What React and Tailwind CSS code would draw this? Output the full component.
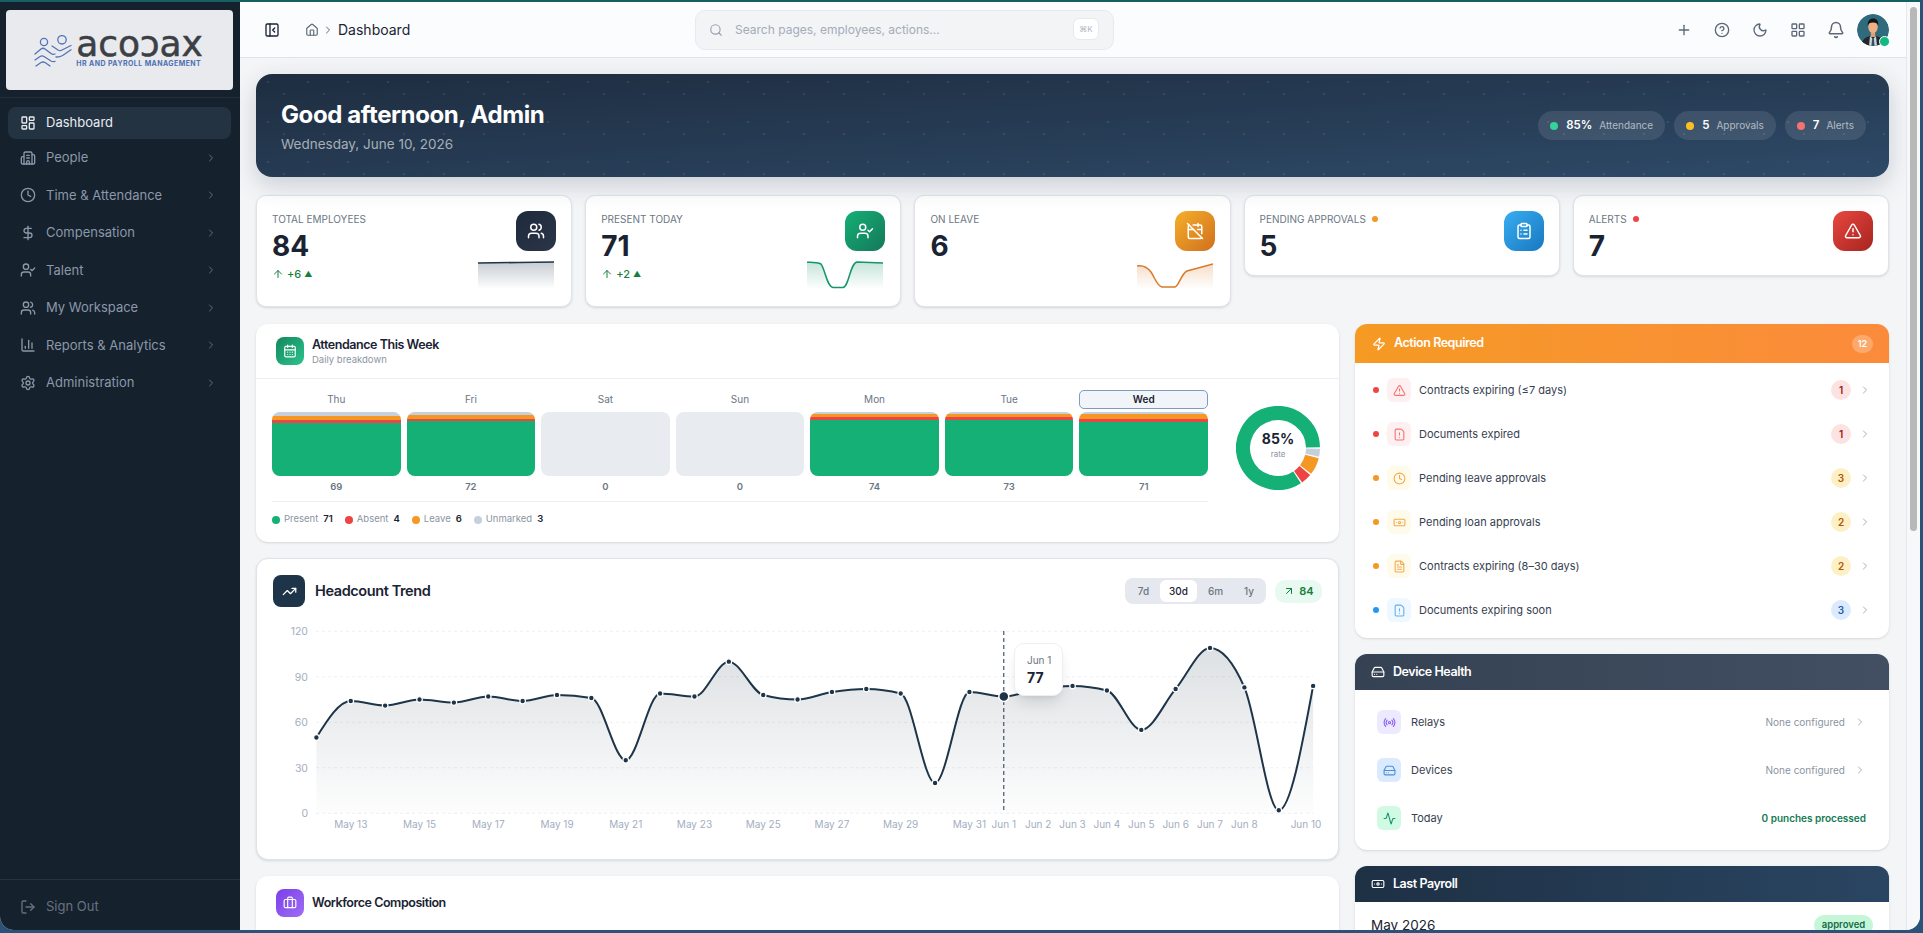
import React from "react";
import {
  Activity, ArrowUp, ArrowUpRight, Banknote, Bell, Briefcase, Building2, CalendarDays, CalendarOff,
  ChartColumn, ChevronRight, CircleHelp, ClipboardList, Clock, DollarSign, FileText, FileWarning,
  HardDrive, Home, LayoutDashboard, LayoutGrid, LogOut, Moon, PanelLeftClose, Plus, Radio, Search,
  Settings, TrendingUp, TriangleAlert, UserCheck, Users, Zap,
} from "lucide-react";

const navItems = [
  { label: "People", icon: Building2 },
  { label: "Time & Attendance", icon: Clock },
  { label: "Compensation", icon: DollarSign },
  { label: "Talent", icon: UserCheck },
  { label: "My Workspace", icon: Users },
  { label: "Reports & Analytics", icon: ChartColumn },
  { label: "Administration", icon: Settings },
];

const days = [
  { day: "Thu", total: 69, parts: [4, 4, 3] },
  { day: "Fri", total: 72, parts: [3, 4, 2] },
  { day: "Sat", total: 0 },
  { day: "Sun", total: 0 },
  { day: "Mon", total: 74, parts: [2, 3, 3] },
  { day: "Tue", total: 73, parts: [2, 3, 3] },
  { day: "Wed", total: 71, parts: [2, 5, 3], today: true },
];

const trend = [50, 74, 71, 75, 73, 77, 74, 78, 76, 35, 79, 77, 100, 78, 75, 80, 82, 79, 20, 80, 77, 82, 84, 81, 55, 82, 109, 83, 2, 84];
const xLabels = {
  1: "May 13", 3: "May 15", 5: "May 17", 7: "May 19", 9: "May 21", 11: "May 23", 13: "May 25", 15: "May 27",
  17: "May 29", 19: "May 31", 20: "Jun 1", 21: "Jun 2", 22: "Jun 3", 23: "Jun 4", 24: "Jun 5", 25: "Jun 6", 26: "Jun 7", 27: "Jun 8",
};

const actions = [
  { label: "Contracts expiring (≤7 days)", count: 1, icon: TriangleAlert, tone: "red" },
  { label: "Documents expired", count: 1, icon: FileWarning, tone: "red" },
  { label: "Pending leave approvals", count: 3, icon: Clock, tone: "amber" },
  { label: "Pending loan approvals", count: 2, icon: Banknote, tone: "amber" },
  { label: "Contracts expiring (8–30 days)", count: 2, icon: FileText, tone: "amber" },
  { label: "Documents expiring soon", count: 3, icon: FileWarning, tone: "blue" },
];

const tones = {
  red: { dot: "bg-[#ef4444]", box: "bg-[#fef0f0] text-[#f87171]", badge: "bg-[#fde2e2] text-[#991b1b]" },
  amber: { dot: "bg-[#f59723]", box: "bg-[#fffbeb] text-[#f5a94a]", badge: "bg-[#fdf0c4] text-[#b45309]" },
  blue: { dot: "bg-[#2196f3]", box: "bg-[#eff8ff] text-[#60aef0]", badge: "bg-[#dbeafe] text-[#1e5ea8]" },
};

// same curve as d3 curveMonotoneX
const monotonePath = (pts) => {
  const n = pts.length;
  const h = [], s = [], t = [];
  for (let i = 0; i < n - 1; i++) {
    h[i] = pts[i + 1][0] - pts[i][0];
    s[i] = (pts[i + 1][1] - pts[i][1]) / h[i];
  }
  for (let i = 1; i < n - 1; i++) {
    const p = (s[i - 1] * h[i] + s[i] * h[i - 1]) / (h[i - 1] + h[i]);
    t[i] = (Math.sign(s[i - 1]) + Math.sign(s[i])) * Math.min(Math.abs(s[i - 1]), Math.abs(s[i]), 0.5 * Math.abs(p));
  }
  t[0] = (3 * s[0] - t[1]) / 2;
  t[n - 1] = (3 * s[n - 2] - t[n - 2]) / 2;
  let d = `M${pts[0][0]},${pts[0][1]}`;
  for (let i = 0; i < n - 1; i++) {
    const k = h[i] / 3;
    d += `C${pts[i][0] + k},${pts[i][1] + k * t[i]} ${pts[i + 1][0] - k},${pts[i + 1][1] - k * t[i + 1]} ${pts[i + 1][0]},${pts[i + 1][1]}`;
  }
  return d;
};

const donutArc = (from, to, r = 35, c = 42) => {
  const rad = (a) => (a * Math.PI) / 180;
  const x = (a) => c + r * Math.cos(rad(a));
  const y = (a) => c - r * Math.sin(rad(a));
  return `M${x(from)} ${y(from)}A${r} ${r} 0 ${to - from > 180 ? 1 : 0} 0 ${x(to)} ${y(to)}`;
};

const Logo = () => (
  <div className="flex items-center justify-center gap-[4px] h-20 pr-[2px] rounded-[4px] bg-[#e8eaed]">
    <svg width="38" height="32" viewBox="0 0 38 32" fill="none" stroke="#5374b8" strokeWidth="1.3" strokeLinecap="round" strokeLinejoin="round" className="mt-[2px]">
      <circle cx="10" cy="7" r="3.6" />
      <circle cx="28" cy="4.8" r="4.2" />
      <path d="M1 19l6-5q2-1.5 4 0l6 4.5q2 1.5 4 .5" />
      <path d="M18 11l6 4q2 1.2 4 0l9-4.5" />
      <path d="M22 22l3-.2q2-.3 4-1.5l8-5.5" />
      <path d="M1 25l5-3.5q2-1.2 4 0l7 4.5q2 1 4 .3" />
      <path d="M2 31l5-3.5q2-1 4 0l5 3.5" />
    </svg>
    <div className="flex flex-col">
      <span className="h-[25px] text-[36px] leading-[24px] tracking-[-0.1px] text-[#3c3f45] [-webkit-text-stroke:0.5px_#3c3f45] [font-family:'DejaVu_Sans',sans-serif] whitespace-nowrap">acoɔax</span>
      <span className="mt-[2px] text-[7px] leading-[10px] font-bold tracking-[0.42px] text-[#4f70b4] whitespace-nowrap">HR AND PAYROLL MANAGEMENT</span>
    </div>
  </div>
);

const Sidebar = () => (
  <aside className="w-[240px] shrink-0 flex flex-col bg-[#16212e]">
    <div className="pt-2 pb-[7px] pl-[6px] pr-[7px] border-b border-[#232f3c]">
      <Logo />
    </div>
    <nav className="flex-1 pt-[9px] pl-2 pr-[9px]">
      <div className="flex items-center gap-[10px] h-8 pl-3 rounded-lg bg-[#243342] text-[13px] text-[#e8edf2]">
        <LayoutDashboard size={16} />
        Dashboard
      </div>
      {navItems.map((item) => (
        <div key={item.label} className="flex items-center gap-[10px] h-[37.5px] pl-3 pr-[14px] text-[13px] text-[#8a98a8]">
          <item.icon size={16} />
          <span className="flex-1">{item.label}</span>
          <ChevronRight size={12} className="text-[#5f6e7e]" />
        </div>
      ))}
    </nav>
    <div className="flex items-center gap-[10px] h-[51px] pl-5 pt-[3px] border-t border-[#27333f] text-[13px] text-[#66727f]">
      <LogOut size={16} />
      Sign Out
    </div>
  </aside>
);

const Avatar = () => (
  <div className="relative w-8 h-8 ml-[2px]">
    <svg width="32" height="32" viewBox="0 0 32 32" className="rounded-full">
      <circle cx="16" cy="16" r="16" fill="#2f6a7d" />
      <path d="M4 32c1-7 5-9 9-10h6c4 1 8 3 9 10z" fill="#23262b" />
      <path d="M13 22l3 3 3-3 1 10h-8z" fill="#c9d6df" />
      <path d="M15.2 24h1.6l.8 8h-3.2z" fill="#37506a" />
      <rect x="13.8" y="17" width="4.4" height="6" fill="#e0a070" />
      <ellipse cx="16" cy="13" rx="4.8" ry="6" fill="#eeb084" />
      <path d="M10.8 12c-.6-5 2-7.5 5.4-7.5S21.8 7 21.2 12c-.6-2.5-2-3.5-5.2-3.5S11.4 9.5 10.8 12z" fill="#15161a" />
    </svg>
    <span className="absolute -right-[1px] -bottom-[1px] w-[11px] h-[11px] rounded-full bg-[#10b981] border border-white" />
  </div>
);

const TopBar = () => (
  <header className="flex items-center h-14 shrink-0 border-b border-[#dfe3ea] bg-[#fbfcfd] pr-[17px]">
    <div className="flex items-center w-[455px] pl-6 text-[#5b6878]">
      <PanelLeftClose size={16} className="text-[#1a2332]" />
      <Home size={14} className="ml-[25px]" />
      <ChevronRight size={12} className="ml-[3px]" />
      <span className="ml-[4px] text-[14px] text-[#1a2332]">Dashboard</span>
    </div>
    <div className="flex items-center w-[419px] h-10 pl-[13px] pr-[14px] rounded-[10px] border border-[#e7e9ee] bg-[#f3f4f6]">
      <Search size={14} className="text-[#98a2b0]" />
      <span className="ml-3 flex-1 text-[12px] text-[#a3acb8]">Search pages, employees, actions...</span>
      <span className="flex items-center justify-center w-[26px] h-[22px] rounded-md border border-[#e7e9ee] bg-white text-[8px] text-[#b0b7c2] -mt-[2px]">⌘K</span>
    </div>
    <div className="ml-auto flex items-center text-[#5b6878]">
      {[Plus, CircleHelp, Moon, LayoutGrid, Bell].map((Icon, i) => (
        <span key={i} className="flex items-center justify-center w-[38px]">
          <Icon size={i === 4 ? 18 : 16} />
        </span>
      ))}
      <Avatar />
    </div>
  </header>
);

const Pill = ({ dot, value, label }) => (
  <div className="flex items-center h-[29px] px-3 rounded-full bg-white/10">
    <span className={`w-2 h-2 rounded-full ${dot}`} />
    <span className="ml-2 text-[11.5px] font-semibold text-white">{value}</span>
    <span className="ml-[7px] text-[10px] text-white/60">{label}</span>
  </div>
);

const Hero = () => (
  <section className="relative flex items-center justify-between h-[103px] pl-[25px] pr-[23px] rounded-2xl bg-gradient-to-br from-[#1e2d40] to-[#2e4a68] shadow-[0_8px_24px_rgba(30,50,75,0.2)] overflow-hidden">
    <div className="absolute inset-0 bg-[radial-gradient(circle,rgba(255,255,255,0.09)_1px,transparent_1.2px)] bg-[length:40px_40px] bg-[position:-8px_-12px]" />
    <div className="absolute inset-0 bg-[radial-gradient(circle,rgba(255,255,255,0.09)_1px,transparent_1.2px)] bg-[length:40px_40px] bg-[position:-32px_0px]" />
    <div className="relative pt-[2px]">
      <h1 className="text-[24px] leading-8 font-bold tracking-[-0.4px] text-white">Good afternoon, Admin</h1>
      <p className="mt-[3px] text-[13.5px] leading-5 text-white/60">Wednesday, June 10, 2026</p>
    </div>
    <div className="relative flex gap-[9px]">
      <Pill dot="bg-[#34d399]" value="85%" label="Attendance" />
      <Pill dot="bg-[#fbbf24]" value="5" label="Approvals" />
      <Pill dot="bg-[#f87171]" value="7" label="Alerts" />
    </div>
  </section>
);

const Spark = ({ id, color, d }) => (
  <svg width="76" height="28" viewBox="0 0 76 28" fill="none" className="mt-[10px] mr-[2px]">
    <defs>
      <linearGradient id={id} x1="0" y1="0" x2="0" y2="1">
        <stop offset="0" stopColor={color} stopOpacity="0.25" />
        <stop offset="1" stopColor={color} stopOpacity="0" />
      </linearGradient>
    </defs>
    <path d={`${d}V28H0Z`} fill={`url(#${id})`} />
    <path d={d} stroke={color} strokeWidth="1.5" />
  </svg>
);

const KpiCard = ({ title, value, dot, icon: Icon, iconBg, delta, spark }) => (
  <div className={`flex justify-between px-[15px] pt-[15px] rounded-[10px] border border-[#dfe3ea] bg-white shadow-sm ${spark ? "h-[112px]" : "h-[81px]"}`}>
    <div>
      <div className="flex items-center gap-[6px] text-[10px] leading-[16px] text-[#6b7684] uppercase">
        {title}
        {dot && <span className={`w-[6px] h-[6px] rounded-full ${dot}`} />}
      </div>
      <div className="mt-[5px] text-[28px] leading-7 font-bold text-[#1a2332]">{value}</div>
      {delta && (
        <div className="flex items-center gap-[3px] mt-[8px] text-[11px] leading-3 font-medium text-[#15803d]">
          <ArrowUp size={12} />
          {delta}
          <span className="text-[8px]">▲</span>
        </div>
      )}
    </div>
    <div className="flex flex-col items-end">
      <div className={`flex items-center justify-center w-10 h-10 rounded-xl text-white ${iconBg}`}>
        <Icon size={18} />
      </div>
      {spark}
    </div>
  </div>
);

const CardHead = ({ icon: Icon, iconBg, title, sub }) => (
  <div className="flex items-center gap-2 h-[55px] px-5 border-b border-[#eceef2]">
    <div className={`flex items-center justify-center w-7 h-7 rounded-lg text-white ${iconBg}`}>
      <Icon size={14} />
    </div>
    <div>
      <div className="text-[12.5px] leading-[16px] font-semibold tracking-[-0.45px] text-[#1a2332]">{title}</div>
      {sub && <div className="text-[9.5px] leading-[13px] text-[#8b95a3]">{sub}</div>}
    </div>
  </div>
);

const Attendance = () => (
  <section className="h-[218px] rounded-xl bg-white shadow-sm overflow-hidden">
    <CardHead icon={CalendarDays} iconBg="bg-gradient-to-br from-[#14875f] to-[#2cc48d]" title="Attendance This Week" sub="Daily breakdown" />
    <div className="flex pl-4 pt-[11px]">
      <div className="w-[936px]">
        <div className="grid grid-cols-7 gap-[6px]">
          {days.map((d) => (
            <div key={d.day} className="flex flex-col">
              <div className={`flex items-center justify-center h-[19px] rounded-[5px] text-[10px] ${d.today ? "border border-[#7d9cbf] bg-[#f1f5f9] font-semibold text-[#1a2332]" : "text-[#6b7684]"}`}>
                {d.day}
              </div>
              <div className="flex flex-col h-16 mt-[3px] rounded-lg overflow-hidden bg-[#e8ebf0]">
                {d.parts && (
                  <>
                    <div className="bg-[#c5d0dc]" style={{ height: d.parts[0] }} />
                    <div className="bg-[#f59723]" style={{ height: d.parts[1] }} />
                    <div className="bg-[#ef4444]" style={{ height: d.parts[2] }} />
                    <div className="flex-1 bg-[#14b076]" />
                  </>
                )}
              </div>
              <div className="mt-[6px] text-center text-[9.5px] leading-[10px] font-semibold text-[#6b7684]">{d.total}</div>
            </div>
          ))}
        </div>
        <div className="flex items-center h-[36px] mt-[9px] border-t border-[#eceef2] text-[9.5px] text-[#8b95a3]">
          {[["Present", 71, "bg-[#14b076]"], ["Absent", 4, "bg-[#ef4444]"], ["Leave", 6, "bg-[#f59723]"], ["Unmarked", 3, "bg-[#c5d0dc]"]].map(([label, n, dot]) => (
            <span key={label} className="flex items-center mr-[12px]">
              <span className={`w-2 h-2 rounded-full mr-[4px] ${dot}`} />
              {label}
              <b className="ml-[5px] font-semibold text-[#1a2332]">{n}</b>
            </span>
          ))}
        </div>
      </div>
      <div className="relative w-[84px] h-[84px] ml-[28px] mt-[16px]">
        <svg width="84" height="84" viewBox="0 0 84 84" fill="none" strokeWidth="14">
          <path d={donutArc(1, 303)} stroke="#14b076" />
          <path d={donutArc(305, 320)} stroke="#ef4444" />
          <path d={donutArc(322, 346)} stroke="#f59723" />
          <path d={donutArc(348, 359)} stroke="#c5d0dc" />
        </svg>
        <div className="absolute inset-0 flex flex-col items-center justify-center pb-[7px]">
          <span className="text-[14px] leading-4 font-bold text-[#1a2332]">85%</span>
          <span className="mt-[2px] text-[8px] leading-[10px] text-[#8b95a3]">rate</span>
        </div>
      </div>
    </div>
  </section>
);

const HeadcountTrend = () => {
  const x = (i) => 317.4 + i * 34.37;
  const y = (v) => 812.3 - v * 1.5167;
  const pts = trend.map((v, i) => [x(i), y(v)]);
  const line = monotonePath(pts);
  return (
    <section className="relative h-[302px] mt-4 rounded-xl border border-[#dfe3ea] bg-white shadow-sm">
      <div className="flex items-center h-8 mt-4 pl-4 pr-4">
        <div className="flex items-center justify-center w-8 h-8 rounded-lg bg-[#1e3448] text-white">
          <TrendingUp size={15} />
        </div>
        <h2 className="ml-[10px] text-[14.5px] font-semibold tracking-[-0.4px] text-[#1a2332]">Headcount Trend</h2>
        <div className="ml-auto flex items-center h-[26px] px-[2px] rounded-lg bg-[#e5e8ee] text-[10px] font-medium text-[#6b7684]">
          <span className="w-[33px] text-center">7d</span>
          <span className="flex items-center justify-center w-[37px] h-[22px] rounded-md bg-white text-[#1a2332]">30d</span>
          <span className="w-[37px] text-center">6m</span>
          <span className="w-[30px] text-center">1y</span>
        </div>
        <div className="flex items-center justify-center gap-1 w-[47px] h-[23px] ml-[9px] rounded-[10px] bg-[#e8f9f1] text-[11px] font-semibold text-[#15803d]">
          <ArrowUpRight size={12} />
          84
        </div>
      </div>
      <svg width="1080" height="215" viewBox="258 620 1080 215" className="mt-[14px]">
        <defs>
          <linearGradient id="trendFill" x1="0" y1="0" x2="0" y2="1">
            <stop offset="0" stopColor="#1e3448" stopOpacity="0.15" />
            <stop offset="1" stopColor="#1e3448" stopOpacity="0.01" />
          </linearGradient>
        </defs>
        {[0, 30, 60, 90, 120].map((v) => (
          <g key={v}>
            <line x1="317" x2="1314" y1={y(v)} y2={y(v)} stroke="#edf0f3" strokeDasharray="3 3" />
            <text x="309" y={y(v) + 4} textAnchor="end" fontSize="10.5" fill="#a4aec0">{v}</text>
          </g>
        ))}
        <path d={`${line}L${x(29)},${y(0)}L${x(0)},${y(0)}Z`} fill="url(#trendFill)" />
        <path d={line} fill="none" stroke="#1e3448" strokeWidth="2" />
        {pts.map(([px, py], i) => (
          <circle key={i} cx={px} cy={py} r="2.8" fill="#1e3448" stroke="#fff" strokeWidth="1.2" />
        ))}
        {Object.entries(xLabels).map(([i, label]) => (
          <text key={i} x={x(Number(i))} y="827" textAnchor="middle" fontSize="10" fill="#a4aec0">{label}</text>
        ))}
        <text x="1307" y="827" textAnchor="middle" fontSize="10" fill="#a4aec0">Jun 10</text>
        <line x1={x(20)} x2={x(20)} y1="630" y2="812" stroke="#1e3448" strokeDasharray="4 3" />
        <circle cx={x(20)} cy={y(77)} r="5" fill="#1e3448" stroke="#fff" strokeWidth="1.5" />
      </svg>
      <div className="absolute left-[757px] top-[84px] w-[49px] h-[53px] pl-3 pt-[9px] rounded-[10px] border border-[#edf0f3] bg-white shadow-lg">
        <div className="text-[10px] leading-[14px] text-[#6b7684] whitespace-nowrap">Jun 1</div>
        <div className="mt-[2px] text-[14px] leading-[18px] font-bold text-[#1a2332]">77</div>
      </div>
    </section>
  );
};

const ActionRequired = () => (
  <section className="rounded-xl bg-white shadow-sm overflow-hidden">
    <div className="flex items-center h-[39px] pl-[17px] pr-4 bg-gradient-to-r from-[#f59a23] to-[#fb8b3b] text-white">
      <Zap size={14} />
      <span className="ml-2 text-[12.5px] font-semibold tracking-[-0.45px]">Action Required</span>
      <span className="ml-auto flex items-center justify-center w-[21px] h-[18px] rounded-full bg-white/25 text-[9px] font-semibold">12</span>
    </div>
    <div className="pt-[5px] pb-[6px]">
      {actions.map((a) => {
        const t = tones[a.tone];
        return (
          <div key={a.label} className="flex items-center h-11 px-[18px]">
            <span className={`w-[6px] h-[6px] rounded-full ${t.dot}`} />
            <span className={`flex items-center justify-center w-6 h-6 ml-2 rounded-md ${t.box}`}>
              <a.icon size={13} />
            </span>
            <span className="ml-2 flex-1 text-[11px] text-[#374151]">{a.label}</span>
            <span className={`flex items-center justify-center w-5 h-5 rounded-full text-[10px] font-semibold ${t.badge}`}>{a.count}</span>
            <ChevronRight size={12} className="ml-2 text-[#a4aec0]" />
          </div>
        );
      })}
    </div>
  </section>
);

const DeviceHealth = () => (
  <section className="mt-4 rounded-xl bg-white shadow-sm overflow-hidden">
    <div className="flex items-center h-9 pl-4 bg-gradient-to-r from-[#354254] to-[#424f62] text-white">
      <HardDrive size={14} />
      <span className="ml-2 text-[12.5px] font-semibold tracking-[-0.45px]">Device Health</span>
    </div>
    <div className="py-2 pl-[22px] pr-[23px]">
      {[
        { label: "Relays", icon: Radio, box: "bg-[#ede9fe] text-[#8b5cf6]" },
        { label: "Devices", icon: HardDrive, box: "bg-[#dbeafe] text-[#4a90d9]" },
      ].map((row) => (
        <div key={row.label} className="flex items-center h-12">
          <span className={`flex items-center justify-center w-6 h-6 rounded-md ${row.box}`}>
            <row.icon size={13} />
          </span>
          <span className="ml-[10px] flex-1 text-[11px] text-[#374151]">{row.label}</span>
          <span className="text-[10px] text-[#8b95a3]">None configured</span>
          <ChevronRight size={12} className="ml-[9px] text-[#a4aec0]" />
        </div>
      ))}
      <div className="flex items-center h-12">
        <span className="flex items-center justify-center w-6 h-6 rounded-md bg-[#d1fae5] text-[#15956d]">
          <Activity size={13} />
        </span>
        <span className="ml-[10px] flex-1 text-[11px] text-[#374151]">Today</span>
        <span className="text-[10px] font-semibold text-[#127a52]">0 punches processed</span>
      </div>
    </div>
  </section>
);

const LastPayroll = () => (
  <section className="mt-4 rounded-t-xl bg-white shadow-sm overflow-hidden">
    <div className="flex items-center h-9 pl-4 bg-gradient-to-r from-[#1e3044] to-[#2a4562] text-white">
      <Banknote size={14} />
      <span className="ml-2 text-[12.5px] font-semibold tracking-[-0.45px]">Last Payroll</span>
    </div>
    <div className="flex items-center justify-between pt-[13px] px-4">
      <span className="text-[13.5px] leading-5 text-[#1a2332]">May 2026</span>
      <span className="flex items-center justify-center w-[59px] h-5 rounded-full bg-[#c6f6d8] text-[9.5px] font-semibold text-[#166a4a]">approved</span>
    </div>
  </section>
);

const App = () => (
  <div className="h-screen flex bg-[#2b5278] pr-[3px] pb-[3px] overflow-hidden [font-family:Inter,sans-serif]">
    <div className="flex-1 flex min-w-0 border-t-2 border-[#155e63] rounded-b-[14px] overflow-hidden bg-[#f4f5f7]">
      <Sidebar />
      <div className="flex-1 min-w-0 flex flex-col">
        <TopBar />
        <main className="flex-1 overflow-hidden pt-4 pl-4 pr-[17px]">
          <Hero />
          <div className="grid grid-cols-5 gap-[13px] items-start mt-[18px]">
            <KpiCard
              title="Total Employees" value="84" icon={Users} iconBg="bg-gradient-to-br from-[#1e2a3c] to-[#2b3549]" delta="+6"
              spark={<Spark id="s1" color="#1e3448" d="M0 2L40 1.5L76 1" />}
            />
            <KpiCard
              title="Present Today" value="71" icon={UserCheck} iconBg="bg-gradient-to-br from-[#14b076] to-[#14785a]" delta="+2"
              spark={<Spark id="s2" color="#15956d" d="M0 1.3C8 1.3 10 1 14 3C18 8 20 26 26 26.5H36C42 26 43 2 50 1L76 2" />}
            />
            <KpiCard
              title="On Leave" value="6" icon={CalendarOff} iconBg="bg-gradient-to-br from-[#f5b02a] to-[#d06f1e]"
              spark={<Spark id="s3" color="#d97a2b" d="M0 5C6 4 10 6 14 11C18 17 20 25 25 26H38C42 25 44 13 50 10L76 3" />}
            />
            <KpiCard title="Pending Approvals" value="5" dot="bg-[#f59723]" icon={ClipboardList} iconBg="bg-gradient-to-br from-[#38aef0] to-[#1878c0]" />
            <KpiCard title="Alerts" value="7" dot="bg-[#ef4444]" icon={TriangleAlert} iconBg="bg-gradient-to-br from-[#e8473f] to-[#a82420]" />
          </div>
          <div className="grid grid-cols-[1fr_534px] gap-4 mt-[17px]">
            <div>
              <Attendance />
              <HeadcountTrend />
              <section className="mt-4 h-[200px] rounded-xl bg-white shadow-sm">
                <CardHead icon={Briefcase} iconBg="bg-gradient-to-br from-[#7a3ee8] to-[#a06cf5]" title="Workforce Composition" />
              </section>
            </div>
            <div>
              <ActionRequired />
              <DeviceHealth />
              <LastPayroll />
            </div>
          </div>
        </main>
      </div>
      <div className="w-[14px] shrink-0 pt-[5px] px-[3px] border-l border-[#e5e7eb] bg-[#f7f8fa]">
        <div className="h-[524px] rounded-full bg-[#b8b8b8]" />
      </div>
    </div>
  </div>
);

export default App;
